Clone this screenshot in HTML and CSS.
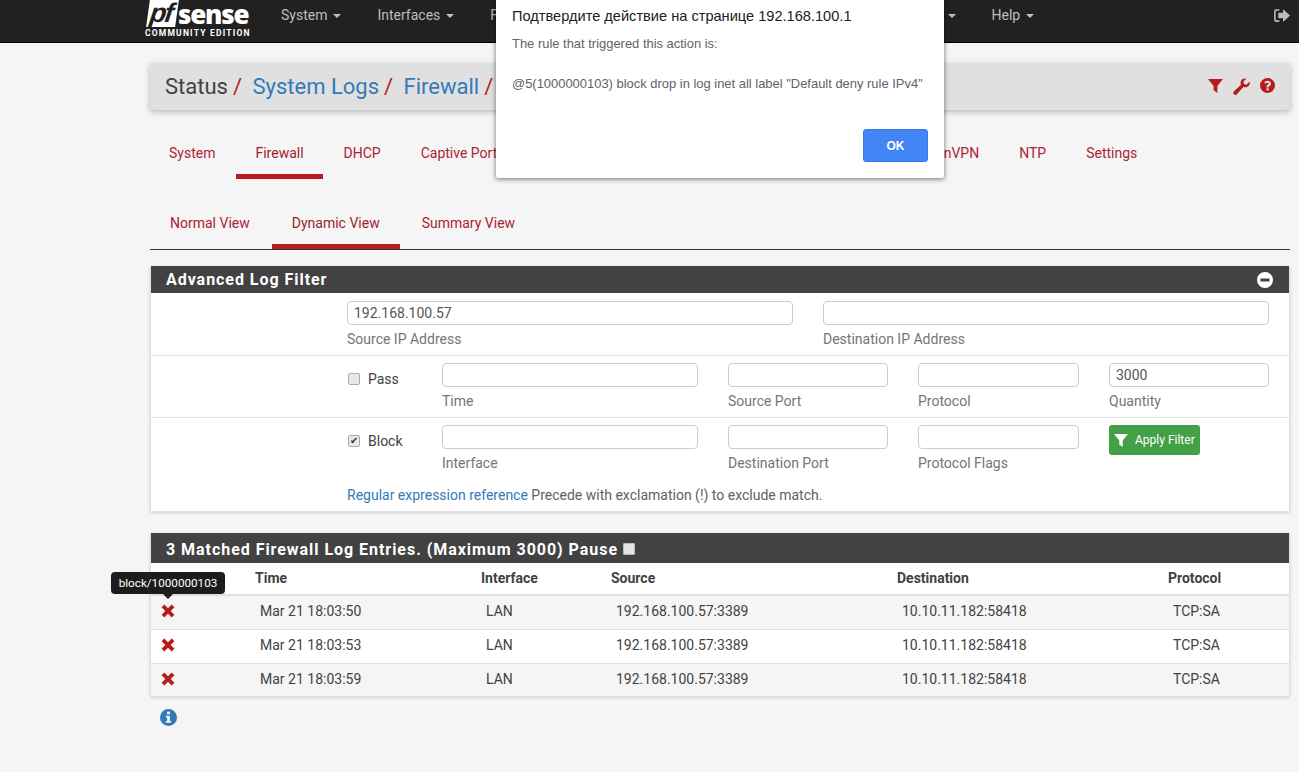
FILE: index.html
```html
<!DOCTYPE html>
<html lang="en">
<head>
    <meta charset="UTF-8">
    <meta name="viewport" content="width=device-width, initial-scale=1.0">
    <title>Status: System Logs: Firewall: Dynamic View</title>
    <link rel="stylesheet" href="styles.css">
</head>
<body>
    <!-- Top navbar -->
    <nav class="navbar">
        <a class="brand">
            <span class="brand-top"><span class="brand-pf">pf</span><span class="brand-sense">sense</span></span>
            <span class="brand-sub">COMMUNITY EDITION</span>
        </a>
        <ul class="nav-menu">
            <li>System<i class="caret"></i></li>
            <li>Interfaces<i class="caret"></i></li>
            <li>Firewall<i class="caret"></i></li>
            <li class="nav-spaced">Services<i class="caret"></i></li>
            <li>VPN<i class="caret"></i></li>
            <li>Status<i class="caret"></i></li>
            <li>Diagnostics<i class="caret"></i></li>
            <li>Help<i class="caret"></i></li>
        </ul>
        <svg class="logout" viewBox="0 0 16 14">
            <path d="M6 1H3a2 2 0 0 0-2 2v8a2 2 0 0 0 2 2h3v-1.500H3a.5.5 0 0 1-.5-.5V3a.5.5 0 0 1 .5-.5h3z"/>
            <path d="M9.500 1 16 7l-6.500 6V9.500H5v-5h4.500z"/>
        </svg>
    </nav>

    <div class="container">
        <!-- Breadcrumb -->
        <div class="page-header">
            <h1 class="crumbs">
                <span>Status</span><em>/</em>
                <a>System Logs</a><em>/</em>
                <a>Firewall</a><em>/</em>
                <a>Dynamic View</a>
            </h1>
            <div class="header-icons">
                <svg viewBox="0 0 16 16"><path d="M0 1h16L10 8.500V16L6 13V8.500z"/></svg>
                <svg viewBox="0 0 16 16"><path d="M15.700 3.400c.5 2-.3 4-2 4.900-1.300.7-2.700.6-3.800 0L3.700 15.300a1.900 1.900 0 0 1-2.800-.1 1.900 1.900 0 0 1 0-2.700L7.500 6.400c-.6-1.200-.6-2.600.1-3.800C8.500.9 10.500.1 12.500.6L9.800 3.300l.5 2.400 2.400.6z"/></svg>
                <svg viewBox="0 0 16 16"><path fill-rule="evenodd" d="M8 0a8 8 0 1 1 0 16A8 8 0 0 1 8 0zM7 11v2.200h2.200V11zM8.200 3C6.500 3 5.300 3.800 4.600 5l1.500 1.100c.5-.7 1-1.100 1.900-1.100.8 0 1.300.4 1.300 1 0 .5-.4.800-1 1.200C7.500 7.700 7 8.300 7 9.300V10h2.200v-.4c0-.5.3-.7 1-1.100.9-.6 1.500-1.200 1.500-2.500C11.700 4.100 10 3 8.200 3z"/></svg>
            </div>
        </div>

        <!-- Log tabs -->
        <ul class="tabs tabs-main">
            <li>System</li>
            <li class="active">Firewall</li>
            <li>DHCP</li>
            <li>Captive Portal Auth</li>
            <li>IPsec</li>
            <li>PPP</li>
            <li>VPN</li>
            <li>Load Balancer</li>
            <li>OpenVPN</li>
            <li>NTP</li>
            <li>Settings</li>
        </ul>
        <ul class="tabs tabs-sub">
            <li>Normal View</li>
            <li class="active">Dynamic View</li>
            <li>Summary View</li>
        </ul>

        <!-- Filter panel -->
        <section class="panel filter-panel">
            <h2 class="panel-heading">
                Advanced Log Filter
                <svg class="collapse-icon" viewBox="0 0 16 16"><path fill-rule="evenodd" d="M8 0a8 8 0 1 1 0 16A8 8 0 0 1 8 0zM3.500 6.500v3h9v-3z"/></svg>
            </h2>
            <div class="form-row row-ip">
                <div class="field"><input type="text" value="192.168.100.57"><span>Source IP Address</span></div>
                <div class="field"><input type="text"><span>Destination IP Address</span></div>
            </div>
            <div class="form-row row-five">
                <label class="check"><input type="checkbox">Pass</label>
                <div class="field f-256"><input type="text"><span>Time</span></div>
                <div class="field f-160"><input type="text"><span>Source Port</span></div>
                <div class="field f-161"><input type="text"><span>Protocol</span></div>
                <div class="field f-160"><input type="text" value="3000"><span>Quantity</span></div>
            </div>
            <div class="form-row row-five row-last">
                <label class="check"><input type="checkbox" checked>Block</label>
                <div class="field f-256"><input type="text"><span>Interface</span></div>
                <div class="field f-160"><input type="text"><span>Destination Port</span></div>
                <div class="field f-161"><input type="text"><span>Protocol Flags</span></div>
                <div class="field f-160">
                    <button class="btn-apply">
                        <svg viewBox="0 0 16 16"><path d="M0 1h16L10 8.500V16L6 13V8.500z"/></svg>
                        Apply Filter
                    </button>
                </div>
                <p class="regex-note"><a>Regular expression reference</a> Precede with exclamation (!) to exclude match.</p>
            </div>
        </section>

        <!-- Results -->
        <section class="panel results-panel">
            <h2 class="panel-heading tall">
                3 Matched Firewall Log Entries. (Maximum 3000) Pause
                <input class="pause-check" type="checkbox">
            </h2>
            <table class="log-table">
                <thead>
                    <tr><th class="c-action">Action</th><th class="c-time">Time</th><th class="c-if">Interface</th><th class="c-src">Source</th><th class="c-dst">Destination</th><th>Protocol</th></tr>
                </thead>
                <tbody>
                    <tr>
                        <td><svg class="x-icon" viewBox="0 0 14 14"><path d="M3.300.6 7 4.300 10.700.6 13.400 3.300 9.700 7l3.700 3.700-2.700 2.700L7 9.700l-3.700 3.700L.6 10.700 4.300 7 .6 3.300z"/></svg></td>
                        <td>Mar 21 18:03:50</td><td>LAN</td><td>192.168.100.57:3389</td><td>10.10.11.182:58418</td><td>TCP:SA</td>
                    </tr>
                    <tr>
                        <td><svg class="x-icon" viewBox="0 0 14 14"><path d="M3.300.6 7 4.300 10.700.6 13.400 3.300 9.700 7l3.700 3.700-2.700 2.700L7 9.700l-3.700 3.700L.6 10.700 4.300 7 .6 3.300z"/></svg></td>
                        <td>Mar 21 18:03:53</td><td>LAN</td><td>192.168.100.57:3389</td><td>10.10.11.182:58418</td><td>TCP:SA</td>
                    </tr>
                    <tr>
                        <td><svg class="x-icon" viewBox="0 0 14 14"><path d="M3.300.6 7 4.300 10.700.6 13.400 3.300 9.700 7l3.700 3.700-2.700 2.700L7 9.700l-3.700 3.700L.6 10.700 4.300 7 .6 3.300z"/></svg></td>
                        <td>Mar 21 18:03:59</td><td>LAN</td><td>192.168.100.57:3389</td><td>10.10.11.182:58418</td><td>TCP:SA</td>
                    </tr>
                </tbody>
            </table>
            <div class="tooltip">block/1000000103</div>
        </section>

        <svg class="info-icon" viewBox="0 0 16 16"><path fill-rule="evenodd" d="M8 0a8 8 0 1 1 0 16A8 8 0 0 1 8 0zM6.600 2.600v2.300h2.800V2.600zM5.500 6.300V8h1.200v3.300H5.500V13h5v-1.700H9.300V6.300z"/></svg>
    </div>

    <!-- Browser confirm dialog -->
    <div class="dialog">
        <h3>Подтвердите действие на странице 192.168.100.1</h3>
        <p class="dialog-line">The rule that triggered this action is:</p>
        <p class="dialog-line rule">@5(1000000103) block drop in log inet all label "Default deny rule IPv4"</p>
        <div class="dialog-actions"><button class="btn-ok">OK</button></div>
    </div>
</body>
</html>
```

FILE: styles.css
```css
* {
    box-sizing: border-box;
}
body {
    margin: 0;
    font-family: Roboto, "Liberation Sans", sans-serif;
    font-size: 14px;
    line-height: 20px;
    color: #424242;
    background-color: #f5f5f5;
    height: 772px;
    overflow: hidden;
}

/* Navbar */
.navbar {
    display: flex;
    height: 43px;
    padding-left: 145px;
    background: #212121;
    border-bottom: 1px solid #000;
    position: relative;
}
.brand {
    display: flex;
    flex-direction: column;
    width: 117px;
    color: #fff;
}
.brand-top {
    display: flex;
    height: 27px;
    align-items: center;
}
.brand-pf {
    width: 29px;
    height: 27px;
    margin-left: 3px;
    padding-right: 3px;
    background: #fff;
    color: #212121;
    font: italic bold 27px/27px "Liberation Sans", sans-serif;
    text-align: center;
    letter-spacing: -2px;
    transform: skewX(-8deg);
}
.brand-sense {
    margin-left: 1px;
    font: 800 26px/26px "Open Sans", sans-serif;
    letter-spacing: -1.2px;
}
.brand-sub {
    margin-top: 1px;
    font-size: 8.5px;
    font-weight: 700;
    line-height: 11px;
    letter-spacing: 1.2px;
    white-space: nowrap;
}
.nav-menu {
    display: flex;
    gap: 36px;
    margin: 0 0 0 19px;
    padding: 5px 0 0;
    list-style: none;
    color: #bdbdbd;
}
.nav-spaced {
    margin-left: 9px;
}
.caret {
    display: inline-block;
    margin-left: 6px;
    vertical-align: middle;
    border-top: 4px solid #bdbdbd;
    border-left: 4px solid transparent;
    border-right: 4px solid transparent;
}
.logout {
    position: absolute;
    right: 9px;
    top: 8px;
    width: 17px;
    height: 15px;
    fill: #bdbdbd;
}

/* Page */
.container {
    width: 1140px;
    margin-left: 150px;
}
.page-header {
    display: flex;
    justify-content: space-between;
    align-items: center;
    height: 47px;
    margin-top: 20px;
    padding: 0 15px;
    background: #e0e0e0;
    box-shadow: 0 2px 6px rgba(0,0,0,0.25);
}
.crumbs {
    margin: 0;
    font-size: 22px;
    font-weight: 400;
    line-height: 47px;
    white-space: nowrap;
}
.crumbs a {
    color: #337ab7;
}
.crumbs em {
    margin: 0 5px;
    color: #b71c1c;
    font-style: normal;
}
.header-icons {
    display: flex;
    gap: 10px;
}
.header-icons svg {
    width: 15px;
    height: 15px;
    fill: #b71c1c;
}
.header-icons svg:nth-child(2) {
    width: 17px;
    height: 17px;
}

/* Tabs */
.tabs {
    display: flex;
    margin: 0;
    padding: 0;
    list-style: none;
    color: #ad2234;
}
.tabs li {
    padding: 0 20px;
    line-height: 20px;
    white-space: nowrap;
}
.tabs .active {
    color: #9c1c30;
    border-bottom: 5px solid #b71c1c;
}
.tabs-main {
    margin-top: 33px;
    height: 36px;
}
.tabs-main li {
    height: 36px;
    padding: 0 20px 0 19px;
    margin-right: 1px;
}
.tabs-main .active {
    padding-right: 19px;
    margin-right: 2px;
}
.tabs-sub {
    height: 37px;
    margin-top: 34px;
    border-bottom: 1px solid #333;
}
.tabs-sub li {
    height: 36px;
    margin-right: 2px;
}

/* Panels */
.panel {
    background: #fff;
    border: 1px solid #e0e0e0;
    border-top: none;
    box-shadow: 0 1px 3px rgba(0,0,0,0.15);
    position: relative;
}
.filter-panel {
    margin-top: 16px;
    height: 246px;
}
.results-panel {
    margin-top: 21px;
    height: 164px;
}
.panel-heading {
    position: relative;
    height: 27px;
    margin: 0;
    padding-left: 15px;
    background: #424242;
    color: #fff;
    font-size: 16px;
    font-weight: 700;
    line-height: 27px;
    letter-spacing: 0.96px;
}
.panel-heading.tall {
    height: 30px;
    line-height: 33px;
}
.collapse-icon {
    position: absolute;
    right: 16px;
    top: 6px;
    width: 16px;
    height: 16px;
    fill: #fff;
}
.pause-check {
    appearance: none;
    display: inline-block;
    width: 12px;
    height: 12px;
    margin: 0;
    vertical-align: 0;
    background: #e4e4e4;
    border: 1px solid #bbb;
    border-radius: 1px;
}

/* Filter form */
.form-row {
    display: flex;
    gap: 30px;
    padding: 7px 20px 0 196px;
    border-bottom: 1px solid #e0e0e0;
    color: #757575;
}
.row-ip {
    height: 63px;
    padding-top: 8px;
}
.row-ip .field {
    flex: 1;
}
.row-five {
    height: 62px;
}
.row-last {
    flex-wrap: wrap;
    align-content: flex-start;
    row-gap: 12px;
    height: 93px;
    border-bottom: none;
}
.field {
    display: flex;
    flex-direction: column;
    gap: 4px;
}
.field input {
    width: 100%;
    height: 24px;
    padding: 0 6px;
    font: inherit;
    color: #555;
    background: #fff;
    border: 1px solid #ccc;
    border-radius: 4px;
}
.f-256 {
    width: 256px;
}
.f-160 {
    width: 160px;
}
.f-161 {
    width: 161px;
}
.check {
    display: flex;
    align-items: center;
    gap: 8px;
    width: 65px;
    height: 20px;
    margin-top: 6px;
    color: #424242;
}
.check input {
    appearance: none;
    display: flex;
    align-items: center;
    justify-content: center;
    width: 12px;
    height: 12px;
    margin: 0 0 0 1px;
    background: #e8e8e8;
    border: 1px solid #aaa;
    border-radius: 2px;
}
.check input:checked::before {
    content: "✔";
    font-size: 10px;
    line-height: 10px;
    color: #333;
}
.btn-apply {
    display: flex;
    align-items: center;
    gap: 7px;
    width: 91px;
    height: 30px;
    padding: 0 0 0 5px;
    background: #43a047;
    color: #fff;
    font: inherit;
    font-size: 12px;
    border: none;
    border-radius: 3px;
}
.btn-apply svg {
    width: 14px;
    height: 14px;
    fill: #fff;
}
.regex-note {
    width: 100%;
    margin: 0;
    color: #616161;
}
.regex-note a {
    color: #337ab7;
}

/* Log table */
.log-table {
    width: 1138px;
    table-layout: fixed;
    border-collapse: collapse;
}
.log-table th {
    height: 32px;
    padding: 0 5px 2px;
    text-align: left;
    font-weight: 700;
    color: #424242;
    border-bottom: 2px solid #e0e0e0;
}
.log-table td {
    height: 34px;
    padding: 0 10px 2px;
    border-bottom: 1px solid #e0e0e0;
}
.log-table tbody tr:nth-child(odd) {
    background: #f5f5f5;
}
.log-table tbody tr:last-child td {
    height: 33px;
    padding-bottom: 1px;
    border-bottom: none;
}
.c-action {
    width: 99px;
    padding-left: 7px !important;
}
.c-time {
    width: 226px;
}
.c-if {
    width: 130px;
}
.c-src {
    width: 286px;
}
.c-dst {
    width: 271px;
}
.x-icon {
    display: block;
    width: 14px;
    height: 14px;
    fill: #b71c1c;
}
.tooltip {
    position: absolute;
    left: -40px;
    top: 39px;
    width: 114px;
    height: 22px;
    background: #1c1c1c;
    color: #fff;
    font-size: 11.7px;
    line-height: 22px;
    text-align: center;
    border-radius: 4px;
}
.tooltip::after {
    content: "";
    position: absolute;
    left: 52px;
    top: 22px;
    border-top: 5px solid #1c1c1c;
    border-left: 5px solid transparent;
    border-right: 5px solid transparent;
}
.info-icon {
    display: block;
    width: 17px;
    height: 17px;
    margin: 12px 0 0 10px;
    fill: #337ab7;
}

/* Confirm dialog */
.dialog {
    position: absolute;
    left: 496px;
    top: 0;
    width: 448px;
    height: 178px;
    padding: 7px 16px 0;
    background: #fff;
    border-radius: 0 0 2px 2px;
    box-shadow: 0 1px 5px rgba(0,0,0,0.55);
    font-family: "Liberation Sans", sans-serif;
}
.dialog h3 {
    margin: 0;
    font-size: 14.6px;
    font-weight: 400;
    line-height: 18px;
    color: #212121;
}
.dialog-line {
    margin: 10px 0 0;
    font-size: 12.95px;
    line-height: 18px;
    color: #5f6368;
    white-space: nowrap;
}
.rule {
    margin-top: 22px;
}
.dialog-actions {
    position: absolute;
    right: 16px;
    bottom: 16px;
}
.btn-ok {
    display: block;
    width: 65px;
    height: 33px;
    background: #4285f4;
    color: #fff;
    font: bold 12px "Liberation Sans", sans-serif;
    border: 1px solid #3b78e7;
    border-radius: 3px;
}
```
